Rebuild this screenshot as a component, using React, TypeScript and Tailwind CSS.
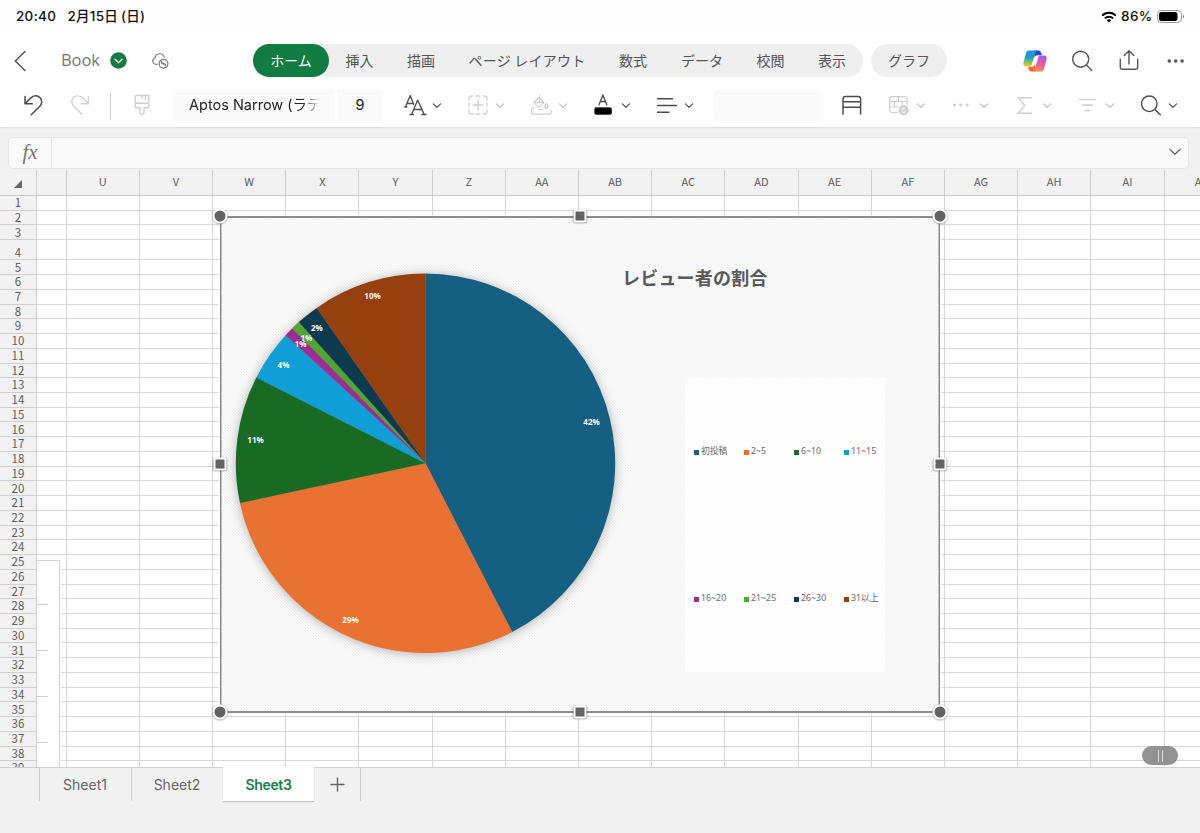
import React from "react";

type IconProps = { className?: string; children: React.ReactNode; w?: number; h?: number };

function Icon({ className = "", children, w = 22, h = 22 }: IconProps) {
  return (
    <svg
      width={w}
      height={h}
      viewBox={`0 0 ${w} ${h}`}
      fill="none"
      stroke="currentColor"
      strokeWidth="1.4"
      strokeLinecap="round"
      strokeLinejoin="round"
      className={`shrink-0 ${className}`}
    >
      {children}
    </svg>
  );
}

function Chevron({ className = "" }: { className?: string }) {
  return (
    <Icon w={10} h={8} className={className}>
      <path d="M1.4 2.9 5 6.4l3.6-3.5" strokeWidth="1.2" />
    </Icon>
  );
}

const tabs = [
  { label: "挿入", width: "w-[61px]" },
  { label: "描画", width: "w-[62px]" },
  { label: "ページ レイアウト", width: "w-[150px] tracking-[0.25px]" },
  { label: "数式", width: "w-[62px]" },
  { label: "データ", width: "w-[76px]" },
  { label: "校閲", width: "w-[61px]" },
  { label: "表示", width: "w-[62px]" },
];

const columns = ["U", "V", "W", "X", "Y", "Z", "AA", "AB", "AC", "AD", "AE", "AF", "AG", "AH", "AI"];
const rowHeights = Array.from({ length: 39 }, (_, i) => (i === 0 ? 15 : i === 1 ? 14.4 : i === 2 ? 15.1 : i === 3 ? 19.9 : 14.735));

type Slice = { from: number; to: number; color: string };
const slices: Slice[] = [
  { from: 0, to: 152.8, color: "#156082" },
  { from: 152.8, to: 257.9, color: "#e97132" },
  { from: 257.9, to: 296.9, color: "#196b24" },
  { from: 296.9, to: 312.5, color: "#0f9ed5" },
  { from: 312.5, to: 315.4, color: "#a02b93" },
  { from: 315.4, to: 318.1, color: "#4ea72e" },
  { from: 318.1, to: 325, color: "#0d3a4e" },
  { from: 325, to: 360, color: "#96400f" },
];

const labels = [
  { x: 591.5, y: 423, text: "42%" },
  { x: 350.5, y: 621, text: "29%" },
  { x: 255.5, y: 441, text: "11%" },
  { x: 283.5, y: 366, text: "4%" },
  { x: 300.7, y: 345, text: "1%" },
  { x: 306.3, y: 339, text: "1%" },
  { x: 316.8, y: 328.5, text: "2%" },
  { x: 372.5, y: 297, text: "10%" },
];

const legend = [
  { text: "初投稿", color: "bg-[#156082]" },
  { text: "2~5", color: "bg-[#e97132]" },
  { text: "6~10", color: "bg-[#196b24]" },
  { text: "11~15", color: "bg-[#0f9ed5]" },
  { text: "16~20", color: "bg-[#a02b93]" },
  { text: "21~25", color: "bg-[#4ea72e]" },
  { text: "26~30", color: "bg-[#0d3a4e]" },
  { text: "31以上", color: "bg-[#96400f]" },
];

function slicePath({ from, to }: Slice) {
  const cx = 205.5;
  const cy = 247.3;
  const r = 189.7;
  const pt = (a: number) => {
    const t = (a * Math.PI) / 180;
    return `${(cx + r * Math.sin(t)).toFixed(2)} ${(cy - r * Math.cos(t)).toFixed(2)}`;
  };
  return `M${cx} ${cy}L${pt(from)}A${r} ${r} 0 ${to - from > 180 ? 1 : 0} 1 ${pt(to)}Z`;
}

function StatusBar() {
  return (
    <div className="flex h-[33px] items-center bg-[#fefefe] pl-4 pr-[15px] font-['Inter','Noto_Sans_CJK_JP',sans-serif] text-[13.5px] font-medium text-[#111]">
      <span className="w-[51.5px] tracking-[0.3px]">20:40</span>
      <span className="whitespace-nowrap tracking-[0.25px]">2月15日<span className="ml-[3px]">(日)</span></span>
      <svg className="ml-auto" width="16" height="12" viewBox="0 0 16 12" fill="none" stroke="#000" strokeWidth="2">
        <path d="M1.2 4.6a9.6 9.6 0 0 1 13.6 0M3.9 7.4a5.8 5.8 0 0 1 8.2 0" />
        <path d="M8 11.5 5.8 9.3a3.1 3.1 0 0 1 4.4 0Z" fill="#000" stroke="none" />
      </svg>
      <span className="ml-1 w-[36px] whitespace-nowrap text-[13.5px] tracking-[0.4px]">86%</span>
      <svg width="28" height="13" viewBox="0 0 28 13" className="block">
        <rect x=".5" y=".5" width="24" height="12" rx="3.8" fill="none" stroke="#999" />
        <rect x="2" y="2" width="18.5" height="9" rx="2.5" fill="#000" />
        <path d="M26 4.5c1.6.6 1.6 3.4 0 4Z" fill="#999" />
      </svg>
    </div>
  );
}

function TitleBar() {
  return (
    <div className="flex h-[55px] items-center pl-[14px] text-[#565656]">
      <Icon w={13} h={22}><path d="M11 1.5 1.3 11 11 20.5" strokeWidth="1.5" /></Icon>
      <span className="ml-[34px] w-[49px] font-['Open_Sans',sans-serif] text-[16.5px] tracking-[-0.1px] text-[#777]">Book</span>
      <svg width="17" height="17" viewBox="0 0 17 17" fill="none">
        <circle cx="8.5" cy="8.5" r="8.3" fill="#107c41" />
        <path d="m5 7.3 3.5 3.4L12 7.3" stroke="#fff" strokeWidth="1.3" strokeLinecap="round" />
      </svg>
      <Icon w={18} h={18} className="ml-[24px] text-[#777]">
        <path d="M6.5 12.2H4.3a3.2 3.2 0 0 1-.2-6.2A4.7 4.7 0 0 1 13.3 5.2" strokeWidth="1.1" />
        <circle cx="12.5" cy="11.8" r="4.4" strokeWidth="1.2" />
        <path d="M10.5 9.8v2h2m2 2v-2h-2M9.7 9l5.6 5.6" strokeWidth="1" />
      </Icon>
      <nav className="ml-[84px] flex h-[33px] w-[610px] items-center rounded-full bg-[#efefef] font-['Noto_Sans_CJK_JP',sans-serif] text-[14px] text-[#555]">
        <span className="flex h-full w-[76px] shrink-0 items-center justify-center rounded-full bg-[#107c41] text-white">ホーム</span>
        {tabs.map((t) => (
          <span key={t.label} className={`${t.width} shrink-0 whitespace-nowrap text-center`}>{t.label}</span>
        ))}
      </nav>
      <span className="ml-[8px] flex h-[33px] w-[76px] items-center justify-center rounded-full bg-[#efefef] font-['Noto_Sans_CJK_JP',sans-serif] text-[14px] text-[#555]">グラフ</span>
      <svg width="24" height="22" viewBox="0 0 24 22" className="ml-[76px] shrink-0">
        <defs>
          <linearGradient id="cpA" x1="0" y1="0" x2="0" y2="1">
            <stop offset="0" stopColor="#1b8fe8" /><stop offset=".45" stopColor="#1f9fc8" /><stop offset=".75" stopColor="#86c94e" /><stop offset="1" stopColor="#f2cd22" />
          </linearGradient>
          <linearGradient id="cpB" x1=".6" y1="0" x2=".3" y2="1">
            <stop offset="0" stopColor="#a858ee" /><stop offset=".5" stopColor="#ee5b9b" /><stop offset="1" stopColor="#fb8b50" />
          </linearGradient>
        </defs>
        <path d="M11 .5h4.600c1.500 0 2.100.9 2.600 2.400l.7 2.400h-4.500c-1.700 0-2.400 1-2.900 2.700Z" fill="#2348c8" />
        <path d="M12.500 21.500H8.200c-1.500 0-2.100-.9-2.600-2.400l-.7-2.400h4.200c1.700 0 2.400-1 2.900-2.700Z" fill="#f4673b" />
        <path d="M5.900.5h8.300c-1.200.5-1.700 1.600-2.100 3.100L9 14c-.6 1.900-1.300 2.500-3 2.500H2.900C.7 16.500-.2 14.900.5 12.500L3 3.300C3.500 1.500 4.300.5 5.900.5Z" fill="url(#cpA)" />
        <path d="M18.100 21.500H9.800c1.200-.5 1.700-1.600 2.100-3.100L15 8c.6-1.900 1.300-2.500 3-2.500h3.100c2.200 0 3.100 1.600 2.400 4L21 18.700c-.5 1.800-1.300 2.800-2.900 2.800Z" fill="url(#cpB)" />
      </svg>
      <Icon className="ml-[24px]"><circle cx="9.7" cy="9.2" r="8" /><path d="m15.4 15 5.400 5.400" /></Icon>
      <Icon w={20} className="ml-[26px]"><path d="M1.300 9.300v8c0 1.300.8 2 2 2h13.400c1.200 0 2-.7 2-2v-8M10 14V1M5.200 5.500 10 .8l4.800 4.700" /></Icon>
      <Icon w={18} h={6} className="ml-[28px]"><g fill="currentColor" stroke="none"><circle cx="2.300" cy="3" r="1.800" /><circle cx="8.700" cy="3" r="1.800" /><circle cx="15.100" cy="3" r="1.800" /></g></Icon>
    </div>
  );
}

function Toolbar() {
  return (
    <div className="flex h-[38px] items-center pb-[4px] pl-[23px] text-[#4c4c4c]">
      <Icon w={21}><path d="M2 2.500v7.300h7.300M2.300 9.500l5.300-5.400c3-3 7-2.900 9.400-.5s2.300 6.200-.4 8.900L8.200 20.700" strokeWidth="1.500" /></Icon>
      <Icon w={21} className="ml-[25.5px] text-[#d2d2d2]"><path d="M18.500 2.500v7.300h-7.300M18.200 9.500l-5.300-5.400c-3-3-7-2.900-9.400-.5s-2.300 6.200.4 8.900l7.900 7.700" /></Icon>
      <div className="ml-[19.5px] h-[27px] w-px bg-[#cfcfcf]" />
      <Icon w={18} className="ml-[22px] text-[#cfcfcf]"><path d="M2.200 1.500h13.600v10.700c0 1-.5 1.500-1.500 1.500H11v4.500a2 2 0 0 1-4 0v-4.500H3.700c-1 0-1.500-.5-1.500-1.500ZM2.200 9.300h13.600M9 1.500v3M12.500 1.500V6" /></Icon>
      <div className="ml-[22px] flex h-[33px] w-[161px] items-center overflow-hidden rounded-l-md bg-[#fafafa] pl-[16px]">
        <span className="w-[131px] overflow-hidden whitespace-nowrap font-['Inter','Noto_Sans_CJK_JP',sans-serif] text-[14.5px] text-[#222] [mask-image:linear-gradient(to_right,#000_86%,transparent)]">Aptos Narrow (ラテ</span>
      </div>
      <div className="ml-[3px] flex h-[33px] w-[46px] items-center justify-center rounded-r-md bg-[#fafafa] font-['Inter',sans-serif] text-[14.5px] text-[#222]">9</div>
      <Icon w={23} className="ml-[20.5px]"><path d="M1.500 13 6.200 1.500l3.500 9M3.200 9.500h5M7.500 20.500 13.700 6l6.500 14.500M9.800 15.500h8M6 20.500h3.300M18 20.500h4M.8 13h2" strokeWidth="1.300" /></Icon>
      <Chevron className="ml-[5.5px]" />
      <Icon className="ml-[25px] text-[#cfcfcf]"><path d="M11 6v10M6 11h10M2 6V4.500C2 3 3 2 4.500 2H6M16 2h1.500C19 2 20 3 20 4.500V6M20 16v1.500c0 1.500-1 2.500-2.500 2.500H16M6 20H4.500C3 20 2 19 2 17.500V16M9 2h4M9 20h4M2 9.500v3M20 9.500v3" strokeWidth="1.300" /></Icon>
      <Chevron className="ml-[6px] text-[#bdbdbd]" />
      <Icon w={23} className="ml-[24.5px] text-[#cfcfcf]"><path d="M9.500.8V8M9 3.500 3.800 8.300l5 5 5.200-5.100ZM4 8.300h10M4.500 13.700C2.500 13.900 1.500 15 1.500 16.500v1.700c0 1.200.7 1.900 1.900 1.900h16c1.200 0 1.900-.7 1.900-1.900v-1.700M9.500 15.500h3.500M16.300 9.300c2.600 3 2 5 0 5s-2.300-2 0-5Z" strokeWidth="1.200" /></Icon>
      <Chevron className="ml-[5px] text-[#bdbdbd]" />
      <Icon w={20} className="ml-[25.5px]"><path d="M6 10.800 9.900.9l3.900 9.900M7.300 7.500h5.200" strokeWidth="1.300" /><rect x="1.800" y="13.800" width="16.600" height="6.500" rx="1.200" fill="#000" stroke="#333" strokeWidth="1" /></Icon>
      <Chevron className="ml-[8px]" />
      <Icon className="ml-[24.5px]"><path d="M1.500 4.800h15M1.500 11.500h19M1.500 18.200h11.500" /></Icon>
      <Chevron className="ml-[6.5px]" />
      <div className="ml-[20px] h-[33px] w-[107px] rounded-md bg-[#fafafa]" />
      <Icon className="ml-[20px]"><path d="M2 20V5c0-1.600.8-2.400 2.400-2.400h12.800c1.600 0 2.400.8 2.400 2.400v15M2 7.800h17.600M2 13.300h17.600" strokeWidth="1.500" /></Icon>
      <Icon className="ml-[25px] text-[#cfcfcf]">
        <path d="M9.500 18.500H4.200c-1.500 0-2.400-.9-2.400-2.400V5c0-1.500.9-2.400 2.400-2.400h12.600c1.500 0 2.400.9 2.400 2.400v5M1.800 7.500h17.400M1.800 13h9M10.500 2.600v4.900M6.500 7.500V13M14 7.500V11" strokeWidth="1.200" />
        <circle cx="15.700" cy="16.200" r="5" fill="#cfcfcf" stroke="none" /><path d="M17.200 14.800c-1-1-3.300-.8-3.300.3 0 1.300 3.500.8 3.500 2.300 0 1.300-2.300 1.500-3.500.4" stroke="#fff" strokeWidth=".9" />
      </Icon>
      <Chevron className="ml-[6px] text-[#bdbdbd]" />
      <Icon w={18} h={6} className="ml-[26px] text-[#cfcfcf]"><g fill="currentColor" stroke="none"><circle cx="2.500" cy="3" r="1.600" /><circle cx="8.800" cy="3" r="1.600" /><circle cx="15.100" cy="3" r="1.600" /></g></Icon>
      <Chevron className="ml-[9px] text-[#bdbdbd]" />
      <Icon w={18} className="ml-[27px] text-[#cfcfcf]"><path d="M15.300 3.700H2l6.800 7.800L2 19.200h13.300" /></Icon>
      <Chevron className="ml-[8px] text-[#bdbdbd]" />
      <Icon w={19} className="ml-[26px] text-[#cfcfcf]"><path d="M1.500 5.500h16M4.500 11h10M7.500 16.500h4" /></Icon>
      <Chevron className="ml-[8px] text-[#bdbdbd]" />
      <Icon className="ml-[25px]"><circle cx="9.300" cy="9.800" r="7.800" /><path d="m15 15.500 5.300 5.300" /></Icon>
      <Chevron className="ml-[6px]" />
    </div>
  );
}

function Handle({ className, round }: { className: string; round?: boolean }) {
  return (
    <div className={`absolute -translate-x-1/2 -translate-y-1/2 border-2 border-white bg-[#636363] shadow-[0_0.5px_2px_rgba(0,0,0,0.45)] ${round ? "size-[15px] rounded-full" : "size-[13px] rounded-[2px]"} ${className}`} />
  );
}

function Chart() {
  return (
    <section className="absolute left-[219px] top-[45px] h-[499px] w-[722px] bg-white p-[1px]">
      <div className="h-full w-full border-x-[1px] border-y-[2px] border-[#8c8c8c] bg-white">
        <svg className="absolute left-px top-px" width="720" height="497" viewBox="0 0 720 497">
          <defs>
            <pattern id="hatch" width="3" height="3" patternUnits="userSpaceOnUse">
              <rect width="3" height="3" fill="#fcfcfc" />
              <path d="M0 0h1v1H0zM1 1h1v1H1zM2 2h1v1H2z" fill="#f0f0f0" />
            </pattern>
            <filter id="pieShadow" x="-10%" y="-10%" width="120%" height="120%">
              <feDropShadow dx="0" dy="1" stdDeviation="6" floodColor="#000" floodOpacity=".32" />
            </filter>
          </defs>
          <rect x="2" y="2" width="716" height="493" fill="url(#hatch)" />
          <path d="M.75 0v497M719.25 0v497" stroke="#858585" strokeWidth="1.5" />
          <circle cx="205.5" cy="247.3" r="189" fill="#888" filter="url(#pieShadow)" />
          {slices.map((s) => (
            <path key={s.color} d={slicePath(s)} fill={s.color} />
          ))}
          {labels.map((l, i) => (
            <text key={i} x={l.x - 220} y={l.y - 213.7} textAnchor="middle" className="fill-white font-['Noto_Sans',sans-serif] text-[8px] font-bold">{l.text}</text>
          ))}
        </svg>
        <div className="relative">
          <h2 className="ml-[401px] whitespace-nowrap pt-[46px] font-['Noto_Sans_CJK_JP',sans-serif] text-[18px] font-bold leading-[27px] tracking-[0.2px] text-[#595959]">レビュー者の割合</h2>
          <div className="ml-[464px] mt-[87px] grid h-[294px] w-[200px] grid-cols-[repeat(4,50px)] grid-rows-2 bg-[#fefefe] pl-[9px]">
            {legend.map((l) => (
              <div key={l.text} className="flex items-center gap-[2px] whitespace-nowrap font-['Noto_Sans','Noto_Sans_CJK_JP',sans-serif] text-[8.8px] text-[#6a6a6a]">
                <i className={`mt-px size-[5px] shrink-0 ${l.color}`} />
                {l.text}
              </div>
            ))}
          </div>
        </div>
      </div>
      <Handle round className="left-[0.5px] top-[1px]" />
      <Handle round className="left-[720.5px] top-[1px]" />
      <Handle round className="left-[0.5px] top-[497px]" />
      <Handle round className="left-[720.5px] top-[497px]" />
      <Handle className="left-[360.5px] top-[1px]" />
      <Handle className="left-[360.5px] top-[497px]" />
      <Handle className="left-[0.5px] top-[249px]" />
      <Handle className="left-[720.5px] top-[249px]" />
    </section>
  );
}

function Sheet() {
  return (
    <main className="relative h-[598px] overflow-hidden border-b border-[#d0d0d0] bg-white">
      <div className="flex h-[26px] border-b border-[#c9c9c9] bg-[#f2f2f2] font-['Noto_Sans_CJK_JP',sans-serif] text-[11px] text-[#5c5c5c]">
        <div className="flex w-[37px] shrink-0 items-center justify-end border-r border-[#cfcfcf] pr-[14px] pt-[3px]">
          <svg width="8" height="8" viewBox="0 0 8 8"><path d="M8 0v8H0Z" fill="#666" /></svg>
        </div>
        <div className="w-[29.7px] shrink-0 border-r border-[#cfcfcf]" />
        {columns.map((c) => (
          <div key={c} className="flex w-[73.2px] shrink-0 items-center justify-center border-r border-[#cfcfcf] pb-[2px]">{c}</div>
        ))}
        <div className="flex w-[73.2px] shrink-0 items-center justify-center pb-[2px]">AJ</div>
      </div>
      <div className="flex">
        <div className="w-[37px] shrink-0 border-r border-[#cfcfcf] bg-[#f2f2f2] font-['Noto_Sans_CJK_JP',sans-serif] text-[11.5px] text-[#606060]">
          {rowHeights.map((h, i) => (
            <div key={i} style={{ height: h }} className="flex items-end justify-center border-b border-[#cfcfcf] pb-[1.6px] leading-[12px]">{i + 1}</div>
          ))}
        </div>
        <div className="relative grow overflow-hidden">
          <div>
            {rowHeights.map((h, i) => (
              <div key={i} style={{ height: h }} className="border-b border-[#d8d8db]" />
            ))}
          </div>
          <div className="absolute inset-0 flex">
            <div className="w-[29.7px] shrink-0 border-r border-[#d8d8db]" />
            {columns.map((c) => (
              <div key={c} className="w-[73.2px] shrink-0 border-r border-[#d8d8db]" />
            ))}
          </div>
          <div className="absolute left-0 top-[364px] flex h-[250px] w-[23px] flex-col border-r border-t border-[#d4d4d4] bg-white shadow-[1px_0_0_#fff]">
            <div className="mt-[43px] h-px w-[11px] bg-[#d0d0d0]" />
            <div className="mt-[45px] h-px w-[11px] bg-[#d0d0d0]" />
            <div className="mt-[45px] h-px w-[11px] bg-[#d0d0d0]" />
            <div className="mt-[45px] h-px w-[11px] bg-[#d0d0d0]" />
          </div>
        </div>
      </div>
      <Chart />
      <div className="absolute bottom-[2px] right-[22px] flex h-[19px] w-[36px] items-center justify-center gap-[3px] rounded-full bg-[#929292]">
        <i className="h-3 w-px bg-[#ddd]" />
        <i className="h-3 w-px bg-[#ddd]" />
      </div>
    </main>
  );
}

function SheetTabs() {
  return (
    <footer className="flex h-[65px] items-start bg-[#f1f1f1] pl-[39px] font-['Inter',sans-serif] text-[14px] text-[#666]">
      <div className="flex h-[33px] w-[92px] items-center justify-center border-l border-[#d0d0d0] pr-px">Sheet1</div>
      <div className="flex h-[33px] w-[92px] items-center justify-center border-l border-[#d0d0d0] pr-px">Sheet2</div>
      <div className="relative -mt-px flex h-[34px] w-[91px] items-center justify-center bg-white font-semibold tracking-[-0.35px] text-[#1b7c45] shadow-[0_1px_1px_#c4c4c4]">Sheet3</div>
      <div className="flex h-[33px] w-[47px] items-center justify-center border-r border-[#d0d0d0]">
        <Icon w={16} h={16}><path d="M8.500 1v13M2 7.500h13" /></Icon>
      </div>
    </footer>
  );
}

export default function App() {
  return (
    <div className="h-[833px] w-[1200px] overflow-hidden bg-[#f1f1f1]">
      <header className="h-[127px] bg-white shadow-[0_0_2px_#bbb]">
        <StatusBar />
        <TitleBar />
        <Toolbar />
      </header>
      <div className="flex h-[43px] px-[9px] pt-[11px]">
        <div className="flex h-[30px] w-[1179px] items-center rounded-[4px] bg-[#f9f9f9] shadow-[0_0_0_1px_#e6e6e6]">
          <span className="flex h-full w-[43px] items-center justify-center border-r border-[#e2e2e2] font-['Liberation_Serif',serif] text-[21px] italic text-[#777]">fx</span>
          <Icon w={14} h={10} className="-mt-[2px] ml-auto mr-[6px] text-[#666]"><path d="m1.8 2.2 5.200 5 5.200-5" strokeWidth="1.2" /></Icon>
        </div>
      </div>
      <Sheet />
      <SheetTabs />
    </div>
  );
}
